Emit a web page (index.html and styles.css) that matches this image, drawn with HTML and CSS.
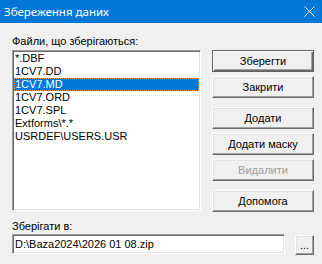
FILE: index.html
```html
<!DOCTYPE html>
<html lang="uk">
<head>
  <meta charset="UTF-8" />
  <title>Збереження даних</title>
  <link rel="stylesheet" href="styles.css">
</head>
<body>

<div class="window">
  <div class="titlebar">
    <span class="title">Збереження даних</span>
    <svg class="close" width="11" height="11" viewBox="0 0 11 11">
      <path d="M0.5 0.5 L10.5 10.5 M10.5 0.5 L0.5 10.5" stroke="#fff" stroke-width="1" fill="none"/>
    </svg>
  </div>

  <div class="content">
    <div class="main">
      <!-- Files list -->
      <div class="left">
        <div class="label">Файли, що зберігаються:</div>
        <ul class="list">
          <li>*.DBF</li>
          <li>1CV7.DD</li>
          <li class="selected">1CV7.MD</li>
          <li>1CV7.ORD</li>
          <li>1CV7.SPL</li>
          <li>Extforms\*.*</li>
          <li>USRDEF\USERS.USR</li>
        </ul>
      </div>

      <!-- Buttons -->
      <div class="buttons">
        <button class="btn default">Зберегти</button>
        <button class="btn">Закрити</button>
        <button class="btn gap">Додати</button>
        <button class="btn">Додати маску</button>
        <button class="btn" disabled>Видалити</button>
        <button class="btn gap">Допомога</button>
      </div>
    </div>

    <div class="label path-label">Зберігати в:</div>
    <div class="path-row">
      <div class="input">D:\Baza2024\2026 01 08.zip</div>
      <button class="btn browse">...</button>
    </div>
  </div>
</div>

</body>
</html>
```

FILE: styles.css
```css
body {
  margin: 0;
  background: #f0f0f0;
  font-family: "Liberation Sans", Arial, sans-serif;
  font-size: 11px;
  line-height: 13px;
  color: #000;
}
.window {
  width: 322px;
  height: 264px;
  background: #f0f0f0;
  overflow: hidden;
}
.titlebar {
  height: 23px;
  background: #0078d7;
  color: #fff;
  display: flex;
  align-items: center;
  justify-content: space-between;
  padding: 0 7px 0 4px;
}
.title {
  font-family: "Noto Sans", sans-serif;
  font-size: 11.5px;
  line-height: 16px;
}
.close {
  display: block;
  margin-top: -1px;
}
.content {
  padding: 12px 8px 0 12px;
}
.main {
  display: flex;
  gap: 11px;
}
.left {
  width: 189px;
}
.list {
  margin: 2px 0 0;
  padding: 0;
  list-style: none;
  height: 161px;
  box-sizing: border-box;
  background: #fff;
  border: 1px solid;
  border-color: #a0a0a0 #fff #fff #a0a0a0;
  box-shadow: inset 1px 1px #696969, inset -1px -1px #e3e3e3;
  padding: 1px 1px 0 1px;
}
.list li {
  height: 13px;
  padding-left: 1px;
  white-space: nowrap;
}
.list li.selected {
  background: #0078d7;
  color: #fff;
  outline: 1px dotted #f79a3a;
  outline-offset: -1px;
}
.buttons {
  display: flex;
  flex-direction: column;
  width: 102px;
  padding-top: 15px;
}
.btn {
  height: 22px;
  box-sizing: border-box;
  margin: 0;
  padding: 0;
  background: #f0f0f0;
  font-family: "Liberation Sans", Arial, sans-serif;
  font-size: 11px;
  color: #000;
  border: 1px solid;
  border-color: #fff #696969 #696969 #fff;
  box-shadow: inset -1px -1px #a0a0a0, inset 1px 1px #e3e3e3;
}
.btn + .btn {
  margin-top: 4px;
}
.btn.gap {
  margin-top: 9px;
}
.btn.default {
  border-color: #646464;
  box-shadow: inset 1px 1px #fff, inset -1px -1px #696969, inset -2px -2px #a0a0a0;
}
.btn:disabled {
  color: #a0a0a0;
}
.path-label {
  margin-top: 8px;
}
.path-row {
  display: flex;
  gap: 10px;
  margin-top: 1px;
}
.input {
  width: 273px;
  height: 20px;
  box-sizing: border-box;
  background: #fff;
  border: 1px solid;
  border-color: #a0a0a0 #fff #fff #a0a0a0;
  box-shadow: inset 1px 1px #696969, inset -1px -1px #e3e3e3;
  padding: 1px 2px;
  line-height: 16px;
  white-space: nowrap;
}
.btn.browse {
  width: 19px;
  height: 20px;
  margin-top: 1px;
  line-height: 14px;
}
```
